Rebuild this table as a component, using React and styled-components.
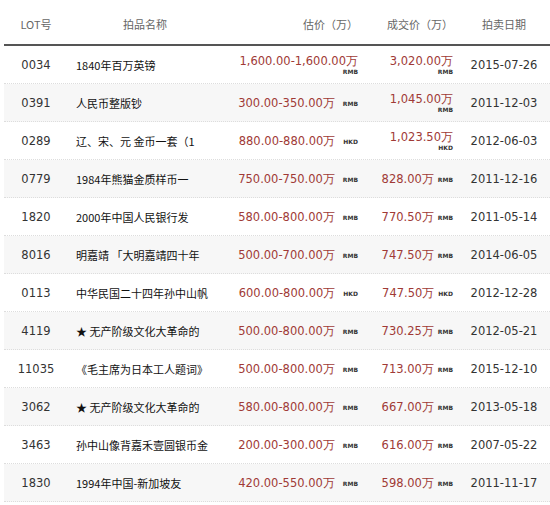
import React from 'react'
import styled, {createGlobalStyle} from 'styled-components'

const GlobalStyle = createGlobalStyle`
  html, body {
    margin: 0;
    padding: 0;
    background: #fff;
  }
`

const rows = [
  {lot:'0034', name:'1840年百万英镑', est:'1,600.00-1,600.00万', estBelow:true, deal:'3,020.00万', dealBelow:true, cur:'RMB', date:'2015-07-26'},
  {lot:'0391', name:'人民币整版钞', est:'300.00-350.00万', deal:'1,045.00万', dealBelow:true, cur:'RMB', date:'2011-12-03'},
  {lot:'0289', name:'辽、宋、元 金币一套（1', est:'880.00-880.00万', deal:'1,023.50万', dealBelow:true, cur:'HKD', date:'2012-06-03'},
  {lot:'0779', name:'1984年熊猫金质样币一', est:'750.00-750.00万', deal:'828.00万', cur:'RMB', date:'2011-12-16'},
  {lot:'1820', name:'2000年中国人民银行发', est:'580.00-800.00万', deal:'770.50万', cur:'RMB', date:'2011-05-14'},
  {lot:'8016', name:'明嘉靖 「大明嘉靖四十年', est:'500.00-700.00万', deal:'747.50万', cur:'RMB', date:'2014-06-05'},
  {lot:'0113', name:'中华民国二十四年孙中山帆', est:'600.00-800.00万', deal:'747.50万', cur:'HKD', date:'2012-12-28'},
  {lot:'4119', name:'★ 无产阶级文化大革命的', est:'500.00-800.00万', deal:'730.25万', cur:'RMB', date:'2012-05-21'},
  {lot:'11035', name:'《毛主席为日本工人题词》', est:'500.00-800.00万', deal:'713.00万', cur:'RMB', date:'2015-12-10'},
  {lot:'3062', name:'★ 无产阶级文化大革命的', est:'580.00-800.00万', deal:'667.00万', cur:'RMB', date:'2013-05-18'},
  {lot:'3463', name:'孙中山像背嘉禾壹圆银币金', est:'200.00-300.00万', deal:'616.00万', cur:'RMB', date:'2007-05-22'},
  {lot:'1830', name:'1994年中国-新加坡友', est:'420.00-550.00万', deal:'598.00万', cur:'RMB', date:'2011-11-17'},
]

const Table = styled.div`
  margin-left: 4px;
  width: 546px;
`

const Grid = styled.div`
  display: grid;
  grid-template-columns: 64px 154px 140px 96px 1fr;
  align-items: center;
`

const Head = styled(Grid)`
  height: 44px;
  border-bottom: 2px solid #555;
  font-family: "Noto Sans CJK SC", sans-serif;
  font-size: 11px;
  color: #666;
`

const HeadCell = styled.div`
  text-align: ${p => p.align || 'center'};
  padding-right: ${p => p.pr || 0}px;
  padding-top: 4px;
`

const Row = styled(Grid)`
  height: 37px;
  border-bottom: 1px dotted #ddd;
  background: ${p => p.odd ? '#fff' : '#f7f7f7'};
`

const Lot = styled.div`
  text-align: center;
  font-family: "DejaVu Sans", sans-serif;
  font-size: 11.5px;
  color: #333;
`

const Name = styled.div`
  padding-left: 8px;
  font-family: "Noto Sans CJK SC", sans-serif;
  font-size: 11px;
  color: #111;
  white-space: nowrap;
  overflow: hidden;
`

const Price = styled.div`
  text-align: right;
  padding-right: ${p => p.pr}px;
  font-family: "DejaVu Sans", sans-serif;
  font-size: 11.5px;
  color: #a03a36;
  line-height: 14px;
  white-space: nowrap;
`

const Cur = styled.span`
  display: ${p => p.below ? 'block' : 'inline'};
  margin-left: ${p => p.below ? 0 : p.gap}px;
  font-family: "DejaVu Sans", sans-serif;
  font-size: 6px;
  font-weight: bold;
  color: #333;
  line-height: 7px;
  vertical-align: 1px;
`

const DateCell = styled.div`
  text-align: center;
  font-family: "DejaVu Sans", sans-serif;
  font-size: 11.5px;
  color: #333;
`

export default function App() {
  return (
    <>
      <GlobalStyle />
      <Table>
        <Head>
          <HeadCell>LOT号</HeadCell>
          <HeadCell>拍品名称</HeadCell>
          <HeadCell align="right" pr={4}>估价（万）</HeadCell>
          <HeadCell align="right" pr={5}>成交价（万）</HeadCell>
          <HeadCell>拍卖日期</HeadCell>
        </Head>
        {rows.map((r, i) => (
          <Row key={r.lot + i} odd={i % 2 === 0}>
            <Lot>{r.lot}</Lot>
            <Name>{r.name}</Name>
            <Price pr={4}>
              {r.est}
              <Cur below={r.estBelow} gap={8}>{r.cur}</Cur>
            </Price>
            <Price pr={5}>
              {r.deal}
              <Cur below={r.dealBelow} gap={4}>{r.cur}</Cur>
            </Price>
            <DateCell>{r.date}</DateCell>
          </Row>
        ))}
      </Table>
    </>
  )
}
